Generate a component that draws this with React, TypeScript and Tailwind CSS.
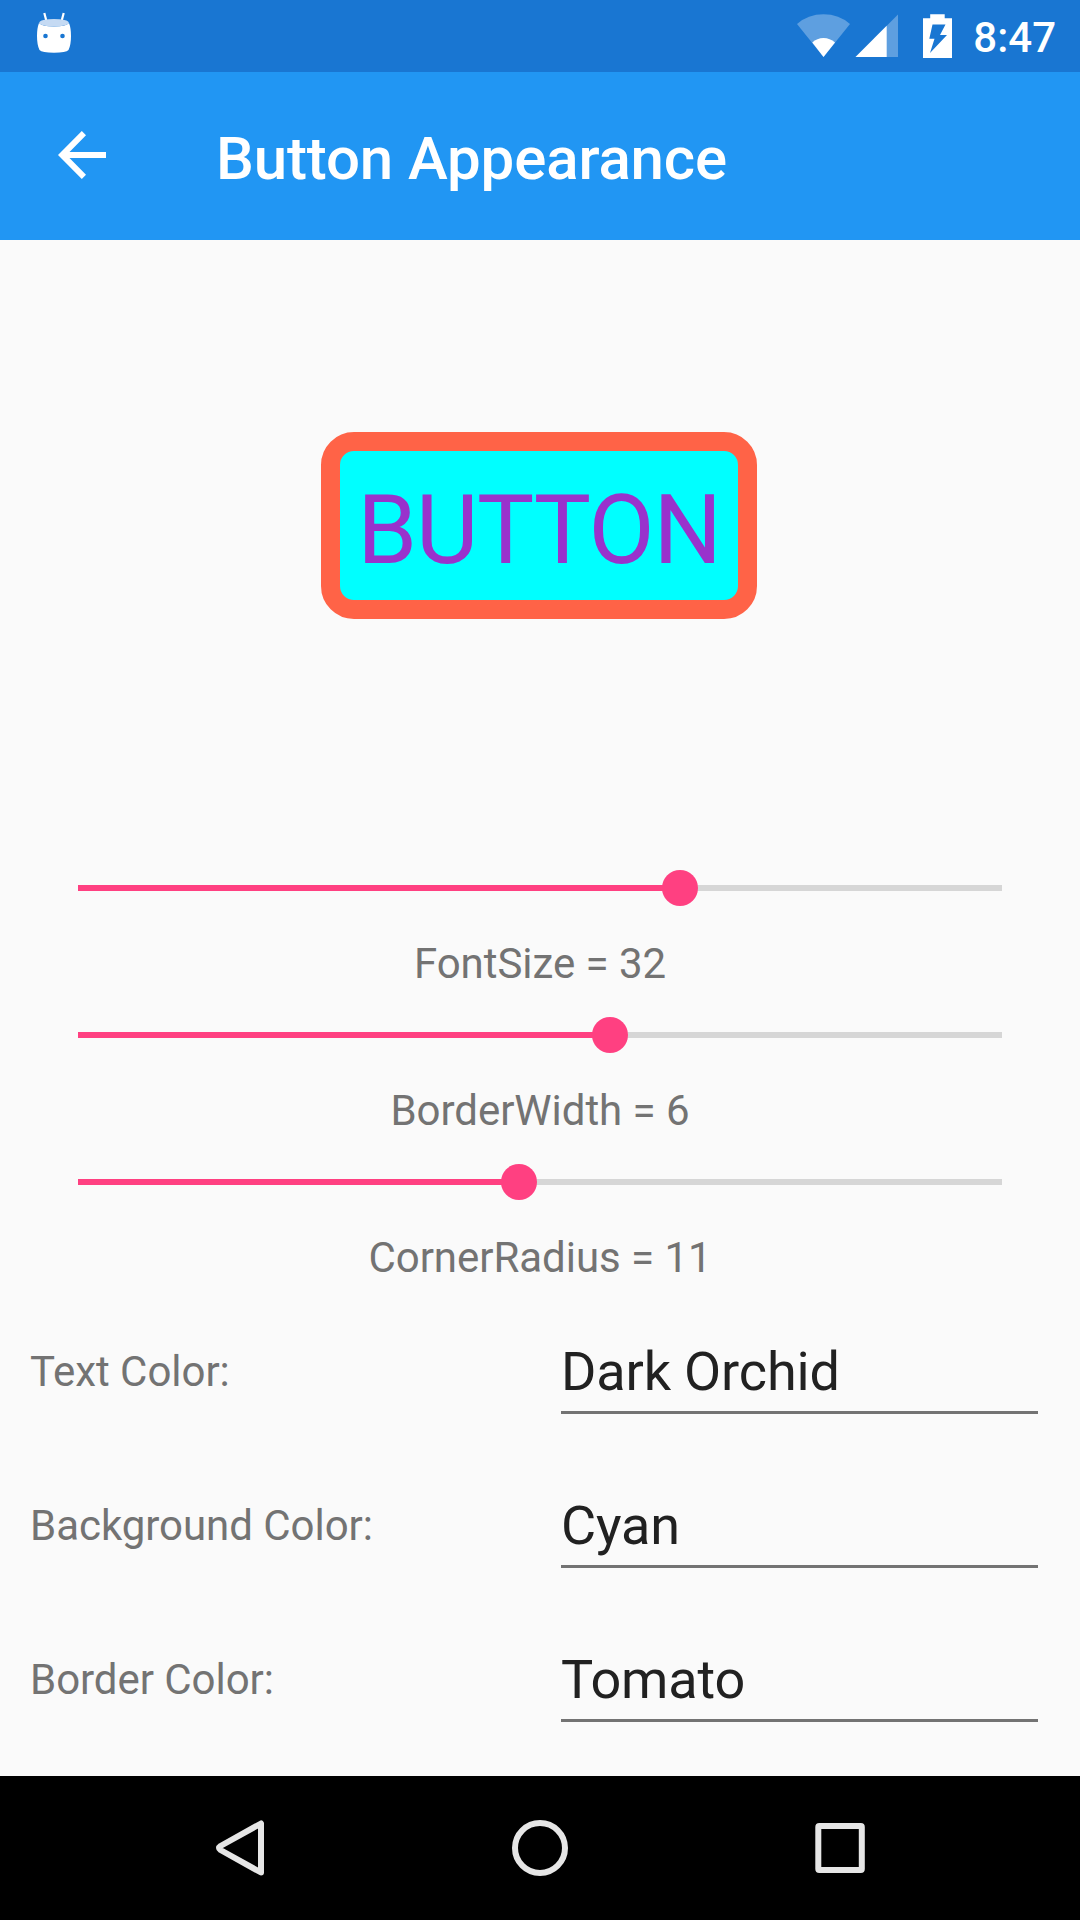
function StatusBar() {
  return (
    <div className="flex h-[72px] shrink-0 items-center bg-[#1976d2] text-white">
      <svg className="ml-9 h-[72px] w-9" viewBox="36 0 36 72">
        <path d="M44.3 13L46.8 22.500M63.7 13L61.2 22.500" stroke="#fff" strokeWidth="2.2" fill="none" />
        <path d="M39 23Q37 28 37 36Q37 45 39.5 50Q42 52.800 54 52.800Q66 52.800 68.500 50Q71 45 71 36Q71 28 69 23Q66 26.500 54 26.500Q42 26.500 39 23Z" fill="#fff" />
        <ellipse cx="54" cy="22.700" rx="14.800" ry="3.800" fill="#c5daf3" />
        <circle cx="45.500" cy="36" r="2.300" fill="#1976d2" />
        <circle cx="62.500" cy="36" r="2.300" fill="#1976d2" />
      </svg>
      <svg className="ml-auto h-[72px] w-[160px]" viewBox="795 0 160 72">
        <path d="M797 24Q808 14.300 823.500 14.300Q839 14.300 850 24L823.500 57Z" fill="#5e9fe0" />
        <path d="M812.300 42.600Q817 38 823.500 38Q830 38 835 42.600L823.500 57Z" fill="#fff" />
        <path d="M855.500 57L898 14.500V57Z" fill="#5e9fe0" />
        <path d="M855.500 57L886.700 25.800V57Z" fill="#fff" />
        <path d="M930.200 14.300H944.700V18.300H952V58H923V18.300H930.200Z" fill="#fff" />
        <path d="M932.500 24.500H945.500L940 35H947L930 53L934.500 38.800H929.300Z" fill="#1976d2" />
      </svg>
      <span className="mr-[24px] ml-[18px] pt-1 text-[42px] leading-[42px] font-medium">8:47</span>
    </div>
  );
}

function AppBar() {
  return (
    <div className="flex h-[168px] shrink-0 items-center bg-[#2196f3] text-white">
      <svg className="ml-[58px] h-12 w-12 overflow-visible" viewBox="58 132 48 48">
        <path
          d="M106 152v6H69.500L86 174.800L81.800 179L58 155L81.800 131L86 135.200L69.500 152Z"
          fill="#fff"
        />
      </svg>
      <h1 className="ml-[110px] pt-[5px] text-[60px] leading-[70px] font-medium tracking-[-0.14px]">Button Appearance</h1>
    </div>
  );
}

function SliderRow({ value, label }: { value: number; label: string }) {
  return (
    <div className="h-[147px] shrink-0">
      <div className="relative mx-[78px] flex h-9 items-center">
        <div className="h-1.5 w-full bg-[#d6d6d6]">
          <div className="h-full bg-[#ff4081]" style={{ width: value }} />
        </div>
        <div className="absolute top-0 size-9 -translate-x-1/2 rounded-full bg-[#ff4081]" style={{ left: value }} />
      </div>
      <p className="mt-[33px] text-center text-[42px] leading-[50px] tracking-[-0.04px] text-[#737373]">{label}</p>
    </div>
  );
}

function PickerRow({ label, value }: { label: string; value: string }) {
  return (
    <div className="flex h-[154px] pl-[30px]">
      <span className="w-[531px] pt-[11px] text-[42px] leading-[50px] tracking-[-0.04px] text-[#737373]">{label}</span>
      <div className="h-[78px] w-[477px] border-b-[3px] border-[#737373] pt-[6px] text-[54px] leading-[60px] tracking-[-0.15px] text-[#212121]">
        {value}
      </div>
    </div>
  );
}

function NavBar() {
  return (
    <div className="flex h-36 shrink-0 items-center bg-black">
      <svg className="h-36 w-full" viewBox="0 1776 1080 144" fill="none" stroke="#e6e6e6" strokeWidth="6" strokeLinejoin="round">
        <path d="M261 1823.500V1872.500L220.500 1850Q217.500 1848 220.500 1846Z" />
        <circle cx="540" cy="1848" r="25" />
        <rect x="818.300" y="1826" width="43.500" height="44" rx="1" />
      </svg>
    </div>
  );
}

export default function App() {
  return (
    <div className="flex h-[1920px] w-[1080px] flex-col overflow-hidden bg-[#fafafa] font-['Roboto',sans-serif]">
      <StatusBar />
      <AppBar />
      <div className="flex h-[630px] shrink-0 justify-center">
        <button className="mt-[192px] mr-[2px] flex h-[187px] w-[436px] items-center justify-center rounded-[33px] border-[19px] border-[#ff6347] bg-[#00ffff] pt-[9px] text-[96px] leading-none tracking-[-1.2px] text-[#9932cc]">
          BUTTON
        </button>
      </div>
      <SliderRow value={602} label="FontSize = 32" />
      <SliderRow value={532} label="BorderWidth = 6" />
      <SliderRow value={441} label="CornerRadius = 11" />
      <div className="mt-[25px] min-h-0 flex-1">
        <PickerRow label="Text Color:" value="Dark Orchid" />
        <PickerRow label="Background Color:" value="Cyan" />
        <PickerRow label="Border Color:" value="Tomato" />
      </div>
      <NavBar />
    </div>
  );
}
